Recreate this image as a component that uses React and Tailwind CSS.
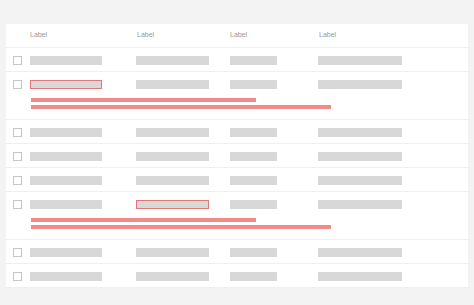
import React from "react";

const rows = [
  { err: null },
  { err: 0 },
  { err: null },
  { err: null },
  { err: null },
  { err: 1 },
  { err: null },
  { err: null },
];

function Bar({ w, red }) {
  return (
    <div
      className={
        "h-[9px] bg-[#d8d8d8] " +
        (red ? "border border-[#e07878] " : "") +
        w
      }
    />
  );
}

function Row({ err }) {
  return (
    <div className="flex flex-col border-b border-[#efefef]">
      <div className="flex h-[23px] items-start pt-[8px]">
        <div className="w-[24px] flex pl-[7px]">
          <div className="w-[9px] h-[9px] border border-[#c6c6c6] bg-white" />
        </div>
        <div className="w-[106px]">
          <Bar w="w-[72px]" red={err === 0} />
        </div>
        <div className="w-[94px]">
          <Bar w="w-[73px]" red={err === 1} />
        </div>
        <div className="w-[88px]">
          <Bar w="w-[47px]" />
        </div>
        <div className="flex-1">
          <Bar w="w-[84px]" />
        </div>
      </div>
      {err !== null && (
        <div className="h-[24px] pl-[25px] pt-[3px] flex flex-col gap-[3px]">
          <div className="h-[4px] w-[225px] bg-[#f38a8a]" />
          <div className="h-[4px] w-[300px] bg-[#f38a8a]" />
        </div>
      )}
    </div>
  );
}

export default function App() {
  return (
    <div
      className="w-[474px] h-[305px] bg-[#f3f3f3] pt-[24px] pl-[6px]"
      style={{ fontFamily: "'Liberation Sans', Arial, sans-serif" }}
    >
      <div className="w-[462px] bg-white">
        <div className="flex h-[24px] items-center border-b border-[#efefef] text-[7px] text-[#999999]">
          <div className="w-[24px]" />
          <div className="w-[107px]">Label</div>
          <div className="w-[93px]">Label</div>
          <div className="w-[89px]">Label</div>
          <div className="flex-1">Label</div>
        </div>
        {rows.map((r, i) => (
          <Row key={i} err={r.err} />
        ))}
      </div>
    </div>
  );
}
